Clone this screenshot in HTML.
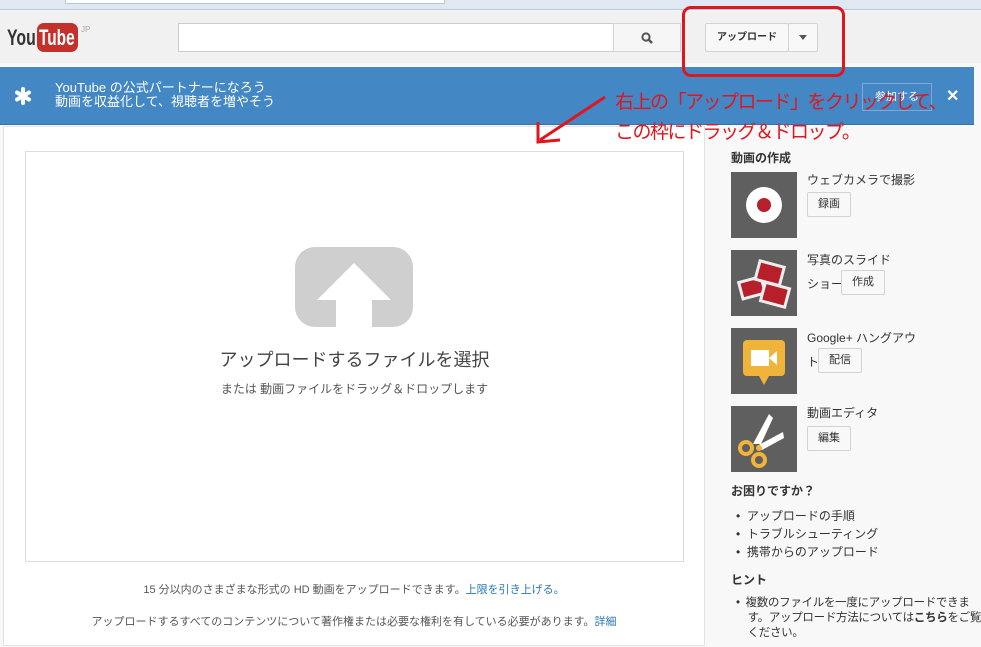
<!DOCTYPE html>
<html><head><meta charset="utf-8"><style>
*{margin:0;padding:0;box-sizing:border-box}
body{width:981px;height:647px;overflow:hidden;background:#f8f8f8;font-family:"Liberation Sans","Noto Sans CJK JP",sans-serif;color:#333;position:relative;font-size:12px}
.a{position:absolute}
.btn{position:absolute;background:#f8f8f8;border:1px solid #d3d3d3;border-radius:2px;font-size:11px;text-align:center;color:#333}
</style></head><body>
<div class="a" style="left:0;top:0;width:981px;height:10px;background:#dfe8f3;border-bottom:1px solid #b9c7d8"></div>
<div class="a" style="left:65px;top:0;width:380px;height:4px;background:#fff;border:1px solid #b9c7d8;border-top:0"></div>
<div class="a" style="left:0;top:11px;width:981px;height:52px;background:#f1f1f1"></div>
<div class="a" style="left:7px;top:25px;font:bold 22px 'Liberation Sans',sans-serif;color:#333;transform:scaleX(0.72);transform-origin:0 0">You</div
><div class="a" style="left:37px;top:23px;width:41px;height:29px;background:#c4302b;border-radius:7px"></div>
<div class="a" style="left:39px;top:25px;color:#fff;font:bold 22px 'Liberation Sans',sans-serif;transform:scaleX(0.7);transform-origin:0 0">Tube</div>
<div class="a" style="left:81px;top:25px;font-size:8px;color:#aaa">JP</div>
<div class="a" style="left:178px;top:23px;width:436px;height:29px;background:#fff;border:1px solid #ccc"></div>
<div class="a" style="left:613px;top:23px;width:68px;height:29px;background:#f6f6f6;border:1px solid #d3d3d3"></div>
<svg class="a" style="left:640px;top:31px" width="14" height="14"><circle cx="6" cy="6" r="3.6" fill="none" stroke="#555" stroke-width="2"/><path d="M8.5 8.5l3.5 3.5" stroke="#555" stroke-width="2.5"/></svg>
<div class="btn" style="left:705px;top:23px;width:84px;height:29px;line-height:27px;font-weight:bold;font-size:10px">アップロード</div>
<div class="btn" style="left:788px;top:23px;width:30px;height:29px"></div>
<div class="a" style="left:799px;top:35px;border:4px solid transparent;border-top:5px solid #555;border-bottom:0"></div>
<div class="a" style="left:0;top:67px;width:974px;height:58px;background:#4387c5;border-bottom:1px solid #3a6f9f"></div>
<svg class="a" style="left:14px;top:87px" width="18" height="18"><g stroke="#fff" stroke-width="4" stroke-linecap="round"><path d="M9 2v14M3 5.5l12 7M3 12.5l12-7"/></g></svg>
<div class="a" style="left:55px;top:81px;color:#fff;font-size:13px;line-height:14px">YouTube の公式パートナーになろう<br>動画を収益化して、視聴者を増やそう</div>
<div class="a" style="left:862px;top:83px;width:70px;height:28px;border:1px solid #7fa9d3;color:#fff;font-size:11px;line-height:26px;text-align:center">参加する</div>
<div class="a" style="left:946px;top:86px;color:#fff;font:bold 16px sans-serif">✕</div>
<div class="a" style="left:3px;top:126px;width:702px;height:520px;background:#fff;border:1px solid #e2e2e2"></div>
<div class="a" style="left:25px;top:151px;width:659px;height:411px;border:1px solid #ddd"></div>
<svg class="a" style="left:295px;top:247px" width="118" height="80"><rect width="118" height="80" rx="20" fill="#cfcfcf"/><path d="M59 16L22 53h19v27h36V53h19z" fill="#fff"/></svg>
<div class="a" style="left:25px;top:346px;width:659px;text-align:center;font-size:18px;color:#444">アップロードするファイルを選択</div>
<div class="a" style="left:25px;top:380px;width:659px;text-align:center;font-size:12px;color:#555">または 動画ファイルをドラッグ＆ドロップします</div>
<div class="a" style="left:3px;top:581px;width:702px;text-align:center;font-size:11px;color:#555">15 分以内のさまざまな形式の HD 動画をアップロードできます。<span style="color:#2a78b5">上限を引き上げる。</span></div>
<div class="a" style="left:3px;top:613px;width:702px;text-align:center;font-size:11px;color:#555">アップロードするすべてのコンテンツについて著作権または必要な権利を有している必要があります。<span style="color:#2a78b5">詳細</span></div>
<div class="a" style="left:731px;top:149px;font-weight:bold;font-size:12px">動画の作成</div>
<div class="a" style="left:731px;top:172px;width:66px;height:66px;background:#5f5f5f"></div>
<div class="a" style="left:746px;top:187px;width:36px;height:36px;border-radius:50%;background:#fff"></div>
<div class="a" style="left:757px;top:198px;width:14px;height:14px;border-radius:50%;background:#b7202b"></div>
<div class="a" style="left:807px;top:171px;font-size:12px">ウェブカメラで撮影</div>
<div class="btn" style="left:807px;top:192px;width:44px;height:25px;line-height:23px">録画</div>
<div class="a" style="left:731px;top:250px;width:66px;height:66px;background:#5f5f5f"></div>
<svg class="a" style="left:731px;top:250px" width="66" height="66"><g transform="rotate(-15 20 38)"><rect x="8" y="28" width="26" height="20" fill="#eee"/><rect x="11" y="31" width="20" height="14" fill="#b7202b"/></g><g transform="rotate(15 45 45)"><rect x="30" y="34" width="28" height="22" fill="#eee"/><rect x="33" y="37" width="22" height="16" fill="#b7202b"/></g><g transform="rotate(15 38 22)"><rect x="25" y="12" width="28" height="22" fill="#eee"/><rect x="28" y="15" width="22" height="16" fill="#b7202b"/></g></svg>
<div class="a" style="left:807px;top:248px;font-size:12px;line-height:24px">写真のスライド<br>ショー</div>
<div class="btn" style="left:841px;top:270px;width:44px;height:25px;line-height:23px">作成</div>
<div class="a" style="left:731px;top:328px;width:66px;height:66px;background:#5f5f5f"></div>
<svg class="a" style="left:731px;top:328px" width="66" height="66"><rect x="12" y="12" width="42" height="36" rx="4" fill="#f0b43a"/><path d="M28 48h10l-5 9z" fill="#f0b43a"/><rect x="20" y="22" width="18" height="16" fill="#fff"/><path d="M38 30l8-7v14z" fill="#fff"/></svg>
<div class="a" style="left:807px;top:326px;font-size:12px;line-height:24px">Google+ ハングアウ<br>ト</div>
<div class="btn" style="left:818px;top:348px;width:44px;height:25px;line-height:23px">配信</div>
<div class="a" style="left:731px;top:406px;width:66px;height:66px;background:#5f5f5f"></div>
<svg class="a" style="left:731px;top:406px" width="66" height="66"><path d="M22 38L38 8l4 4-12 26zM26 40L52 26l1 6-22 12z" fill="#fff"/><circle cx="15" cy="42" r="6" fill="none" stroke="#f0b43a" stroke-width="4"/><circle cx="28" cy="54" r="6" fill="none" stroke="#f0b43a" stroke-width="4"/><circle cx="28" cy="42" r="3" fill="#f0b43a"/></svg>
<div class="a" style="left:807px;top:404px;font-size:12px">動画エディタ</div>
<div class="btn" style="left:807px;top:426px;width:44px;height:25px;line-height:23px">編集</div>
<div class="a" style="left:731px;top:482px;font-weight:bold;font-size:12px">お困りですか？</div>
<div class="a" style="left:736px;top:507px;font-size:12px;line-height:18px">•&nbsp; アップロードの手順<br>•&nbsp; トラブルシューティング<br>•&nbsp; 携帯からのアップロード</div>
<div class="a" style="left:731px;top:571px;font-weight:bold;font-size:12px">ヒント</div>
<div class="a" style="left:736px;top:596px;font-size:11.5px;line-height:15px;width:250px;white-space:nowrap;letter-spacing:-0.3px">•&nbsp; 複数のファイルを一度にアップロードできま<br>&nbsp;&nbsp;&nbsp; す。アップロード方法については<b>こちら</b>をご覧<br>&nbsp;&nbsp;&nbsp; ください。</div>
<div class="a" style="left:682px;top:6px;width:163px;height:71px;border:3px solid #e0161e;border-radius:9px"></div>
<div class="a" style="left:615px;top:88px;color:#e0161e;font-size:19px;line-height:30px;letter-spacing:-1.5px;white-space:nowrap">右上の「アップロード」をクリックして、<br>この枠にドラッグ＆ドロップ。</div>
<svg class="a" style="left:530px;top:92px" width="80" height="55"><path d="M75 5L10 48M8 30L8 50L30 48" fill="none" stroke="#e0161e" stroke-width="3"/></svg>
</body></html>
